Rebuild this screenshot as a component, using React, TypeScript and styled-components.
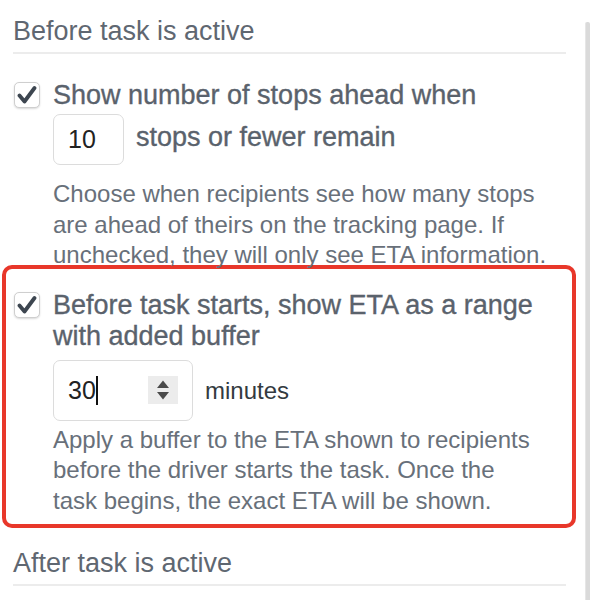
import React from 'react'
import styled, { createGlobalStyle } from 'styled-components'

const GlobalStyle = createGlobalStyle`
  body {
    margin: 0;
    background: #ffffff;
    font-family: "Liberation Sans", Arial, sans-serif;
  }
`

const Page = styled.div`
  display: flex;
  min-height: 600px;
`

const Main = styled.div`
  flex: 1;
  padding: 0 19px 0 14px;
  color: #5c646e;
`

const Gutter = styled.div`
  width: 4px;
  margin-top: 22px;
  background: #dadada;
  border-left: 1px solid #e6e6e6;
  border-radius: 2px 2px 0 0;
`

const SectionTitle = styled.h2<{ $top: number }>`
  margin: ${p => p.$top}px 0 0 -1px;
  padding-bottom: 6px;
  border-bottom: 2px solid #ececec;
  font-size: 27px;
  line-height: 30px;
  font-weight: normal;
  color: #5f6771;
`

const Option = styled.div<{ $top: number }>`
  display: flex;
  align-items: flex-start;
  gap: 13px;
  margin-top: ${p => p.$top}px;
`

const Highlight = styled.div`
  margin: -6px -10px 0 -12px;
  padding: 21px 8px 8px;
  border: 4px solid #e8372a;
  border-radius: 10px;
`

const Box = styled.span`
  flex: none;
  display: flex;
  align-items: center;
  justify-content: center;
  width: 26px;
  height: 26px;
  margin-top: 2px;
  box-sizing: border-box;
  border: 1px solid #cfcfcf;
  border-radius: 5px;
  background: #fff;
  box-shadow: 0 1px 2px rgba(0, 0, 0, 0.15);
`

const Body = styled.div`
  flex: 1;
`

const Label = styled.div`
  font-size: 27px;
  line-height: 31px;
  color: #5a626c;
  -webkit-text-stroke: 0.35px #5a626c;
`

const InputRow = styled.div<{ $top: number }>`
  display: flex;
  align-items: center;
  gap: 12px;
  margin-top: ${p => p.$top}px;
`

const Field = styled.div<{ $w: number; $h: number }>`
  flex: none;
  display: flex;
  align-items: center;
  width: ${p => p.$w}px;
  height: ${p => p.$h}px;
  box-sizing: border-box;
  padding: 0 14px;
  border: 1.5px solid #dcdcdc;
  border-radius: 7px;
  font-size: 25px;
  color: #222;
`

const Caret = styled.span`
  width: 2px;
  height: 29px;
  background: #111;
`

const Stepper = styled.span`
  margin-left: auto;
  display: flex;
  align-items: center;
  justify-content: center;
  width: 30px;
  height: 28px;
  background: #ececec;
`

const InlineText = styled.span<{ $dark?: boolean }>`
  font-size: ${p => (p.$dark ? 24 : 27)}px;
  line-height: 31px;
  color: ${p => (p.$dark ? '#333a40' : '#5a626c')};
  -webkit-text-stroke: ${p => (p.$dark ? '0' : '0.35px #5a626c')};
  margin-top: ${p => (p.$dark ? 0 : -4)}px;
`

const Help = styled.p<{ $top: number; $width: number }>`
  max-width: ${p => p.$width}px;
  margin: ${p => p.$top}px 0 0;
  font-size: 24px;
  line-height: 30.5px;
  color: #68707a;
`

const Check = () => (
  <Box>
    <svg width="20" height="20" viewBox="0 0 20 20">
      <path d="M2.5 10.5 L7.5 16.5 L17.5 3" fill="none" stroke="#3d4650" strokeWidth="3.8" strokeLinecap="round" strokeLinejoin="round" />
    </svg>
  </Box>
)

const Arrows = () => (
  <Stepper>
    <svg width="16" height="24" viewBox="0 0 16 24">
      <path d="M8 2.5 L14 10 H2 Z" fill="#4a4a4a" />
      <path d="M8 21.5 L14 14 H2 Z" fill="#4a4a4a" />
    </svg>
  </Stepper>
)

export default function App() {
  return (
    <Page>
      <GlobalStyle />
      <Main>
        <SectionTitle $top={16}>Before task is active</SectionTitle>

        <Option $top={26}>
          <Check />
          <Body>
            <Label>Show number of stops ahead when</Label>
            <InputRow $top={3}>
              <Field $w={71} $h={51}>10</Field>
              <InlineText>stops or fewer remain</InlineText>
            </InputRow>
            <Help $top={14} $width={505}>
              Choose when recipients see how many stops are ahead of theirs on the tracking page. If
              unchecked, they will only see ETA information.
            </Help>
          </Body>
        </Option>

        <Highlight>
          <Option $top={0}>
            <Check />
            <Body>
              <Label>Before task starts, show ETA as a range with added buffer</Label>
              <InputRow $top={8}>
                <Field $w={140} $h={61}>
                  30
                  <Caret />
                  <Arrows />
                </Field>
                <InlineText $dark>minutes</InlineText>
              </InputRow>
              <Help $top={4} $width={488}>
                Apply a buffer to the ETA shown to recipients before the driver starts the task. Once
                the task begins, the exact ETA will be shown.
              </Help>
            </Body>
          </Option>
        </Highlight>

        <SectionTitle $top={20}>After task is active</SectionTitle>
      </Main>
      <Gutter />
    </Page>
  )
}
